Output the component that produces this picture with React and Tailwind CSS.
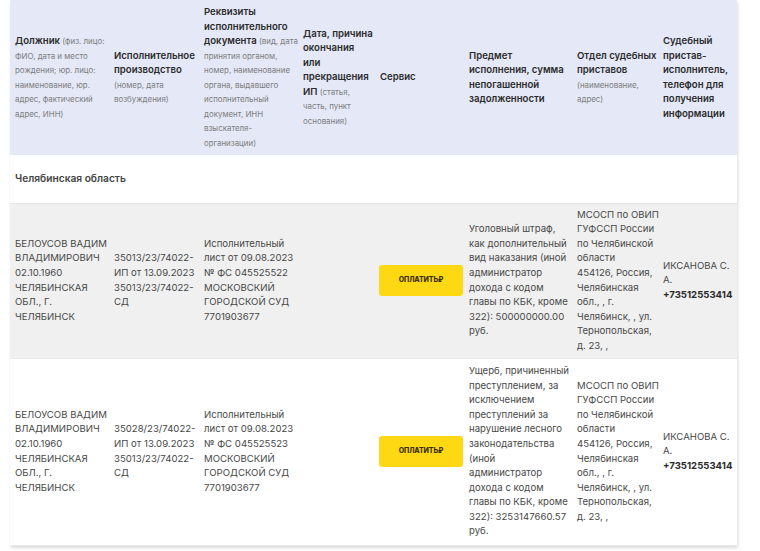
const head = [
  {
    w: 'w-[100px] pl-[5px]',
    bold: [],
    lines: [
      <><b className="font-semibold text-[9.6px] text-[#2b2b2b]">Должник</b> (физ. лицо:</>,
      'ФИО, дата и место',
      'рождения; юр. лицо:',
      'наименование, юр.',
      'адрес, фактический',
      'адрес, ИНН)',
    ],
  },
  {
    w: 'w-[90px] pl-[4px]',
    bold: ['Исполнительное', 'производство'],
    lines: ['(номер, дата', 'возбуждения)'],
  },
  {
    w: 'w-[99px] pl-[4px]',
    bold: ['Реквизиты', 'исполнительного'],
    lines: [
      <><b className="font-semibold text-[9.6px] text-[#2b2b2b]">документа</b> (вид, дата</>,
      'принятия органом,',
      'номер, наименование',
      'органа, выдавшего',
      'исполнительный',
      'документ, ИНН',
      'взыскателя-',
      'организации)',
    ],
  },
  {
    w: 'w-[77px] pl-[4px]',
    bold: ['Дата, причина', 'окончания', 'или', 'прекращения'],
    lines: [
      <><b className="font-semibold text-[9.6px] text-[#2b2b2b]">ИП</b> (статья,</>,
      'часть, пункт',
      'основания)',
    ],
  },
  { w: 'w-[89px] pl-[4px]', bold: ['Сервис'], lines: [] },
  {
    w: 'w-[108px] pl-[4px]',
    bold: ['Предмет', 'исполнения, сумма', 'непогашенной', 'задолженности'],
    lines: [],
  },
  {
    w: 'w-[86px] pl-[4px]',
    bold: ['Отдел судебных', 'приставов'],
    lines: ['(наименование,', 'адрес)'],
  },
  {
    w: 'w-[78px] pl-[4px]',
    bold: ['Судебный', 'пристав-', 'исполнитель,', 'телефон для', 'получения', 'информации'],
    lines: [],
  },
]

const rows = [
  {
    bg: 'bg-[#f0f0f0]',
    h: 'h-[155px]',
    debtor: ['БЕЛОУСОВ ВАДИМ', 'ВЛАДИМИРОВИЧ', '02.10.1960', 'ЧЕЛЯБИНСКАЯ', 'ОБЛ., Г.', 'ЧЕЛЯБИНСК'],
    proc: ['35013/23/74022-', 'ИП от 13.09.2023', '35013/23/74022-', 'СД'],
    doc: ['Исполнительный', 'лист от 09.08.2023', '№ ФС 045525522', 'МОСКОВСКИЙ', 'ГОРОДСКОЙ СУД', '7701903677'],
    subject: [
      'Уголовный штраф,',
      'как дополнительный',
      'вид наказания (иной',
      'администратор',
      'дохода с кодом',
      'главы по КБК, кроме',
      '322): 500000000.00',
      'руб.',
    ],
  },
  {
    bg: 'bg-white',
    h: 'h-[187px]',
    debtor: ['БЕЛОУСОВ ВАДИМ', 'ВЛАДИМИРОВИЧ', '02.10.1960', 'ЧЕЛЯБИНСКАЯ', 'ОБЛ., Г.', 'ЧЕЛЯБИНСК'],
    proc: ['35028/23/74022-', 'ИП от 13.09.2023', '35013/23/74022-', 'СД'],
    doc: ['Исполнительный', 'лист от 09.08.2023', '№ ФС 045525523', 'МОСКОВСКИЙ', 'ГОРОДСКОЙ СУД', '7701903677'],
    subject: [
      'Ущерб, причиненный',
      'преступлением, за',
      'исключением',
      'преступлений за',
      'нарушение лесного',
      'законодательства',
      '(иной',
      'администратор',
      'дохода с кодом',
      'главы по КБК, кроме',
      '322): 3253147660.57',
      'руб.',
    ],
  },
]

const department = [
  'МСОСП по ОВИП',
  'ГУФССП России',
  'по Челябинской',
  'области',
  '454126, Россия,',
  'Челябинская',
  'обл., , г.',
  'Челябинск, , ул.',
  'Тернопольская,',
  'д. 23, ,',
]

const Lines = ({ items }) => (
  <>
    {items.map((t, i) => (
      <div key={i} className="whitespace-nowrap">
        {t}
      </div>
    ))}
  </>
)

export default function App() {
  return (
    <div className="min-h-[551px] bg-white pl-[10px] pr-[23px] font-['Inter','Noto_Sans',sans-serif] text-[#484848]">
      <table className="table-fixed border-collapse w-[727px] shadow-[1px_2px_3px_rgba(0,0,0,0.14)]">
        <thead>
          <tr className="h-[155px] bg-[#e4e8f7]">
            {head.map((c, i) => (
              <th key={i} className={`${c.w} pr-[2px] text-left align-middle font-normal leading-[14.5px]`}>
                {c.bold.map((b, j) => (
                  <div key={j} className="whitespace-nowrap text-[9.6px] font-semibold text-[#2b2b2b]">
                    {b}
                  </div>
                ))}
                {c.lines.map((t, j) => (
                  <div key={j} className="whitespace-nowrap text-[7.9px] text-[#7d7d7d]">
                    {t}
                  </div>
                ))}
              </th>
            ))}
          </tr>
        </thead>
        <tbody>
          <tr className="h-[48px] bg-white border-b border-[#e6e6e6]">
            <td colSpan={8} className="pl-[5px] text-[10.2px] font-semibold text-[#444]">
              Челябинская область
            </td>
          </tr>
          {rows.map((r, i) => (
            <tr key={i} className={`${r.h} ${r.bg} border-b border-[#e8e8e8] text-[9.6px] leading-[14.6px] align-middle`}>
              <td className="pl-[5px]">
                <Lines items={r.debtor} />
              </td>
              <td className="pl-[4px]">
                <Lines items={r.proc} />
              </td>
              <td className="pl-[4px]">
                <Lines items={r.doc} />
              </td>
              <td className="pl-[4px]"></td>
              <td className="pl-[3px]">
                <button className="flex h-[31px] w-[84px] items-center justify-center rounded-[3px] bg-[#ffd814] text-[7px] font-extrabold tracking-[-0.1px] text-[#3a2f00]">
                  ОПЛАТИТЬ₽
                </button>
              </td>
              <td className="pl-[4px]">
                <Lines items={r.subject} />
              </td>
              <td className="pl-[4px]">
                <Lines items={department} />
              </td>
              <td className="pl-[4px]">
                <div className="whitespace-nowrap">ИКСАНОВА С.</div>
                <div>А.</div>
                <div className="whitespace-nowrap font-bold text-[#2b2b2b]">+73512553414</div>
              </td>
            </tr>
          ))}
        </tbody>
      </table>
    </div>
  )
}
